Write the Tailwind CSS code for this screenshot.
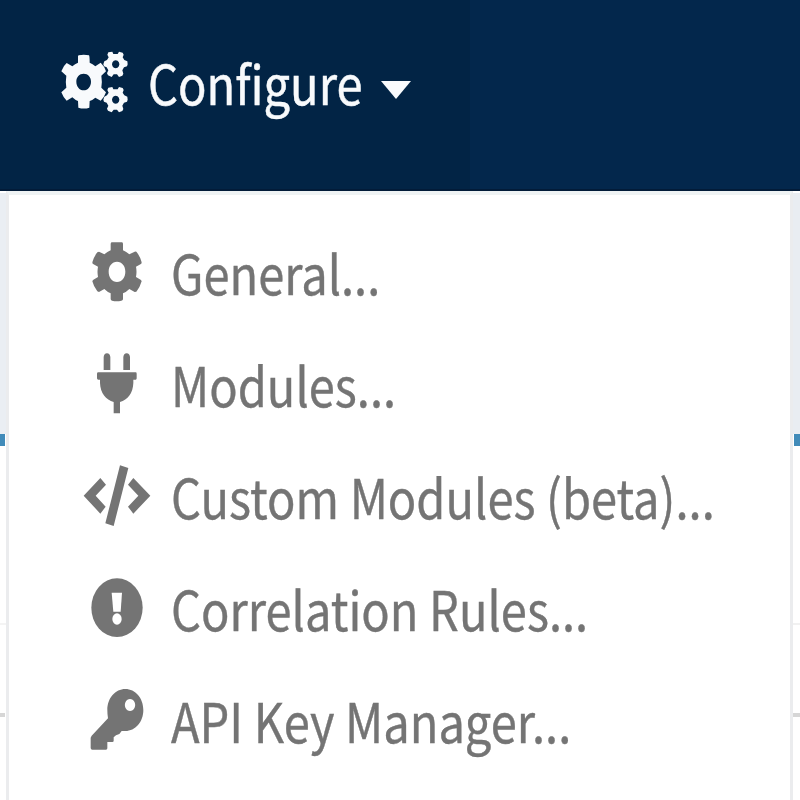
<!DOCTYPE html>
<html lang="en">
<head>
<meta charset="utf-8">
<title>Configure</title>
<script src="https://cdn.jsdelivr.net/npm/@tailwindcss/browser@4"></script>
</head>
<body class="w-[800px] h-[800px] overflow-hidden bg-white font-['Noto_Sans_CJK_SC','Noto_Sans',sans-serif]">
<div class="flex flex-col w-[800px] h-[800px]">
  <header class="flex h-[191px] shrink-0 bg-[#03274c] border-b-2 border-[#021b38]">
    <button class="flex items-start w-[470px] h-full bg-[#022445] pl-[58px] text-[#f8fafc]">
      <svg class="w-[72px] h-[66px] mt-[49px] shrink-0" viewBox="54 57 216 198" fill="currentColor" fill-rule="evenodd">
        <path d="M116 76Q131 73 147 76Q149 78 149 98Q158 101 166 109L182 98Q193 108 198 124L184 137Q187 155 184 173L198 187Q193 202 182 212L166 203Q158 210 149 213L148 233Q132 238 115 233L114 213Q105 210 97 202L80 212Q70 203 64 187L79 173Q76 155 79 137L64 124Q70 107 80 99L97 109Q105 101 114 98V78ZM131 131C118 131 109 141 109 155S118 181 131 181S153 169 153 155S144 131 131 131Z"/>
        <path id="small-gear" d="M205 67L217 65L220 72H233L237 65L248 68L251 74L248 82L253 90L262 94L263 103L261 109L252 112L247 121L250 131L247 137L237 141L231 133H221L215 141L204 136L201 130L205 121L200 112L192 109L190 103L193 94L201 90L206 82L202 74ZM227 91A11 12 0 1 0 227.1 91Z"/>
        <use href="#small-gear" y="106"/>
      </svg>
      <span class="block mt-[42px] ml-[18px] w-[232px] h-[80px] text-[54px] leading-[80px] text-left whitespace-nowrap origin-left scale-x-[0.872] [-webkit-text-stroke:0.5px]">Configure</span>
      <svg class="w-[30px] h-[18px] mt-[81px] ml-px shrink-0" viewBox="0 0 30 18" fill="currentColor"><path d="M0 0H30L15 18Z"/></svg>
    </button>
  </header>
  <div class="flex grow">
    <aside class="w-[6px] flex flex-col shrink-0">
      <div class="h-[243px] bg-[#eaeef3] border-t-2 border-white"></div>
      <div class="h-[12px] w-[5px] bg-[#418bb9]"></div>
      <div class="h-[177px]"></div>
      <div class="h-[2px] bg-[#f4f4f4]"></div>
      <div class="h-[88px]"></div>
      <div class="h-[4px] w-[5px] bg-[#d6d6d6]"></div>
    </aside>
    <nav class="w-[787px] shrink-0 border-x-3 border-t-4 border-x-[#ebecee] border-t-[#eff3f4] bg-white text-[#747474]">
      <ul class="pt-[21px] pl-[72px]">
        <li class="flex items-center h-[112px]">
          <svg class="w-[72px] h-[66px] shrink-0" viewBox="63 57 216 198" fill="currentColor" fill-rule="evenodd"><path d="M155 67H186Q189 68 189 72V91Q199 95 208 103L224 95Q229 94 232 99Q242 113 245 127L244 131L228 140Q231 155 228 171L243 180L245 184Q240 202 229 215L224 216L208 207Q199 216 189 220V238Q188 242 184 242Q170 245 156 242Q152 241 152 237V220Q142 216 133 207L117 216L112 214Q101 200 97 184L99 180L114 171Q111 155 114 140L98 131L97 127Q101 111 112 97L117 95L133 103Q142 95 152 91V72Q152 68 155 67ZM171 125C156 125 146 138 146 155S156 186 171 186S196 172 196 155S186 125 171 125Z"/></svg>
          <span class="ml-[18px] mb-px leading-[80px] text-[54px] whitespace-nowrap origin-left scale-x-[0.871] [-webkit-text-stroke:0.4px]">General...</span>
        </li>
        <li class="flex items-center h-[112px]">
          <svg class="w-[72px] h-[66px] shrink-0" viewBox="63 393 216 198" fill="currentColor"><path d="M131 450V411Q132 401 141 400Q150 401 151 411V450ZM190 450V411Q191 401 200 400Q209 401 210 411V450ZM115 457H227Q230 457 230 461V475Q230 479 227 479H220V489C219 519 203 540 180 546V580H161V546C138 540 121 519 120 489V479H115Q111 479 111 475V461Q111 457 115 457Z"/></svg>
          <span class="ml-[18px] mb-px leading-[80px] text-[54px] whitespace-nowrap origin-left scale-x-[0.871] [-webkit-text-stroke:0.4px]">Modules...</span>
        </li>
        <li class="flex items-center h-[112px]">
          <svg class="w-[72px] h-[66px] shrink-0" viewBox="63 69 216 198" fill="currentColor"><path d="M121 114L138 134L107 167L137 200L121 221L71 167ZM220 114L271 167L220 221L204 200L235 167L204 134ZM180 76L205 84L161 258L136 250Z"/></svg>
          <span class="ml-[18px] mb-px leading-[80px] text-[54px] whitespace-nowrap origin-left scale-x-[0.871] [-webkit-text-stroke:0.4px]">Custom Modules (beta)...</span>
        </li>
        <li class="flex items-center h-[112px]">
          <svg class="w-[72px] h-[66px] shrink-0" viewBox="63 405 216 198"><ellipse cx="171" cy="503" rx="77" ry="88" fill="currentColor"/><path d="M155 458H186L182 515H160Z" fill="white"/><ellipse cx="171" cy="537" rx="14" ry="17" fill="white"/></svg>
          <span class="ml-[18px] mb-px leading-[80px] text-[54px] whitespace-nowrap origin-left scale-x-[0.871] [-webkit-text-stroke:0.4px]">Correlation Rules...</span>
        </li>
        <li class="flex items-center h-[112px]">
          <svg class="w-[72px] h-[66px] shrink-0" viewBox="63 81 216 198" fill="currentColor" fill-rule="evenodd"><path d="M196 87C226 87 250 114 250 150S226 213 196 213H185L178 222L168 226L161 232V242Q161 246 157 246H142V265Q142 269 138 269H97Q92 269 92 264V233L95 227L144 175Q142 163 142 150C142 114 166 87 196 87ZM210 117A15.500 18 0 1 0 210.100 117Z"/></svg>
          <span class="ml-[18px] mb-px leading-[80px] text-[54px] whitespace-nowrap origin-left scale-x-[0.871] [-webkit-text-stroke:0.4px]">API Key Manager...</span>
        </li>
      </ul>
    </nav>
    <aside class="w-[7px] flex flex-col shrink-0">
      <div class="h-[243px] bg-[#e9edf2] border-t-2 border-white"></div>
      <div class="h-[12px] ml-px bg-[#418bb9]"></div>
      <div class="h-[177px]"></div>
      <div class="h-[2px] bg-[#f1f1f1]"></div>
      <div class="h-[88px]"></div>
      <div class="h-[4px] bg-[#d6d6d6]"></div>
    </aside>
  </div>
</div>
</body>
</html>
